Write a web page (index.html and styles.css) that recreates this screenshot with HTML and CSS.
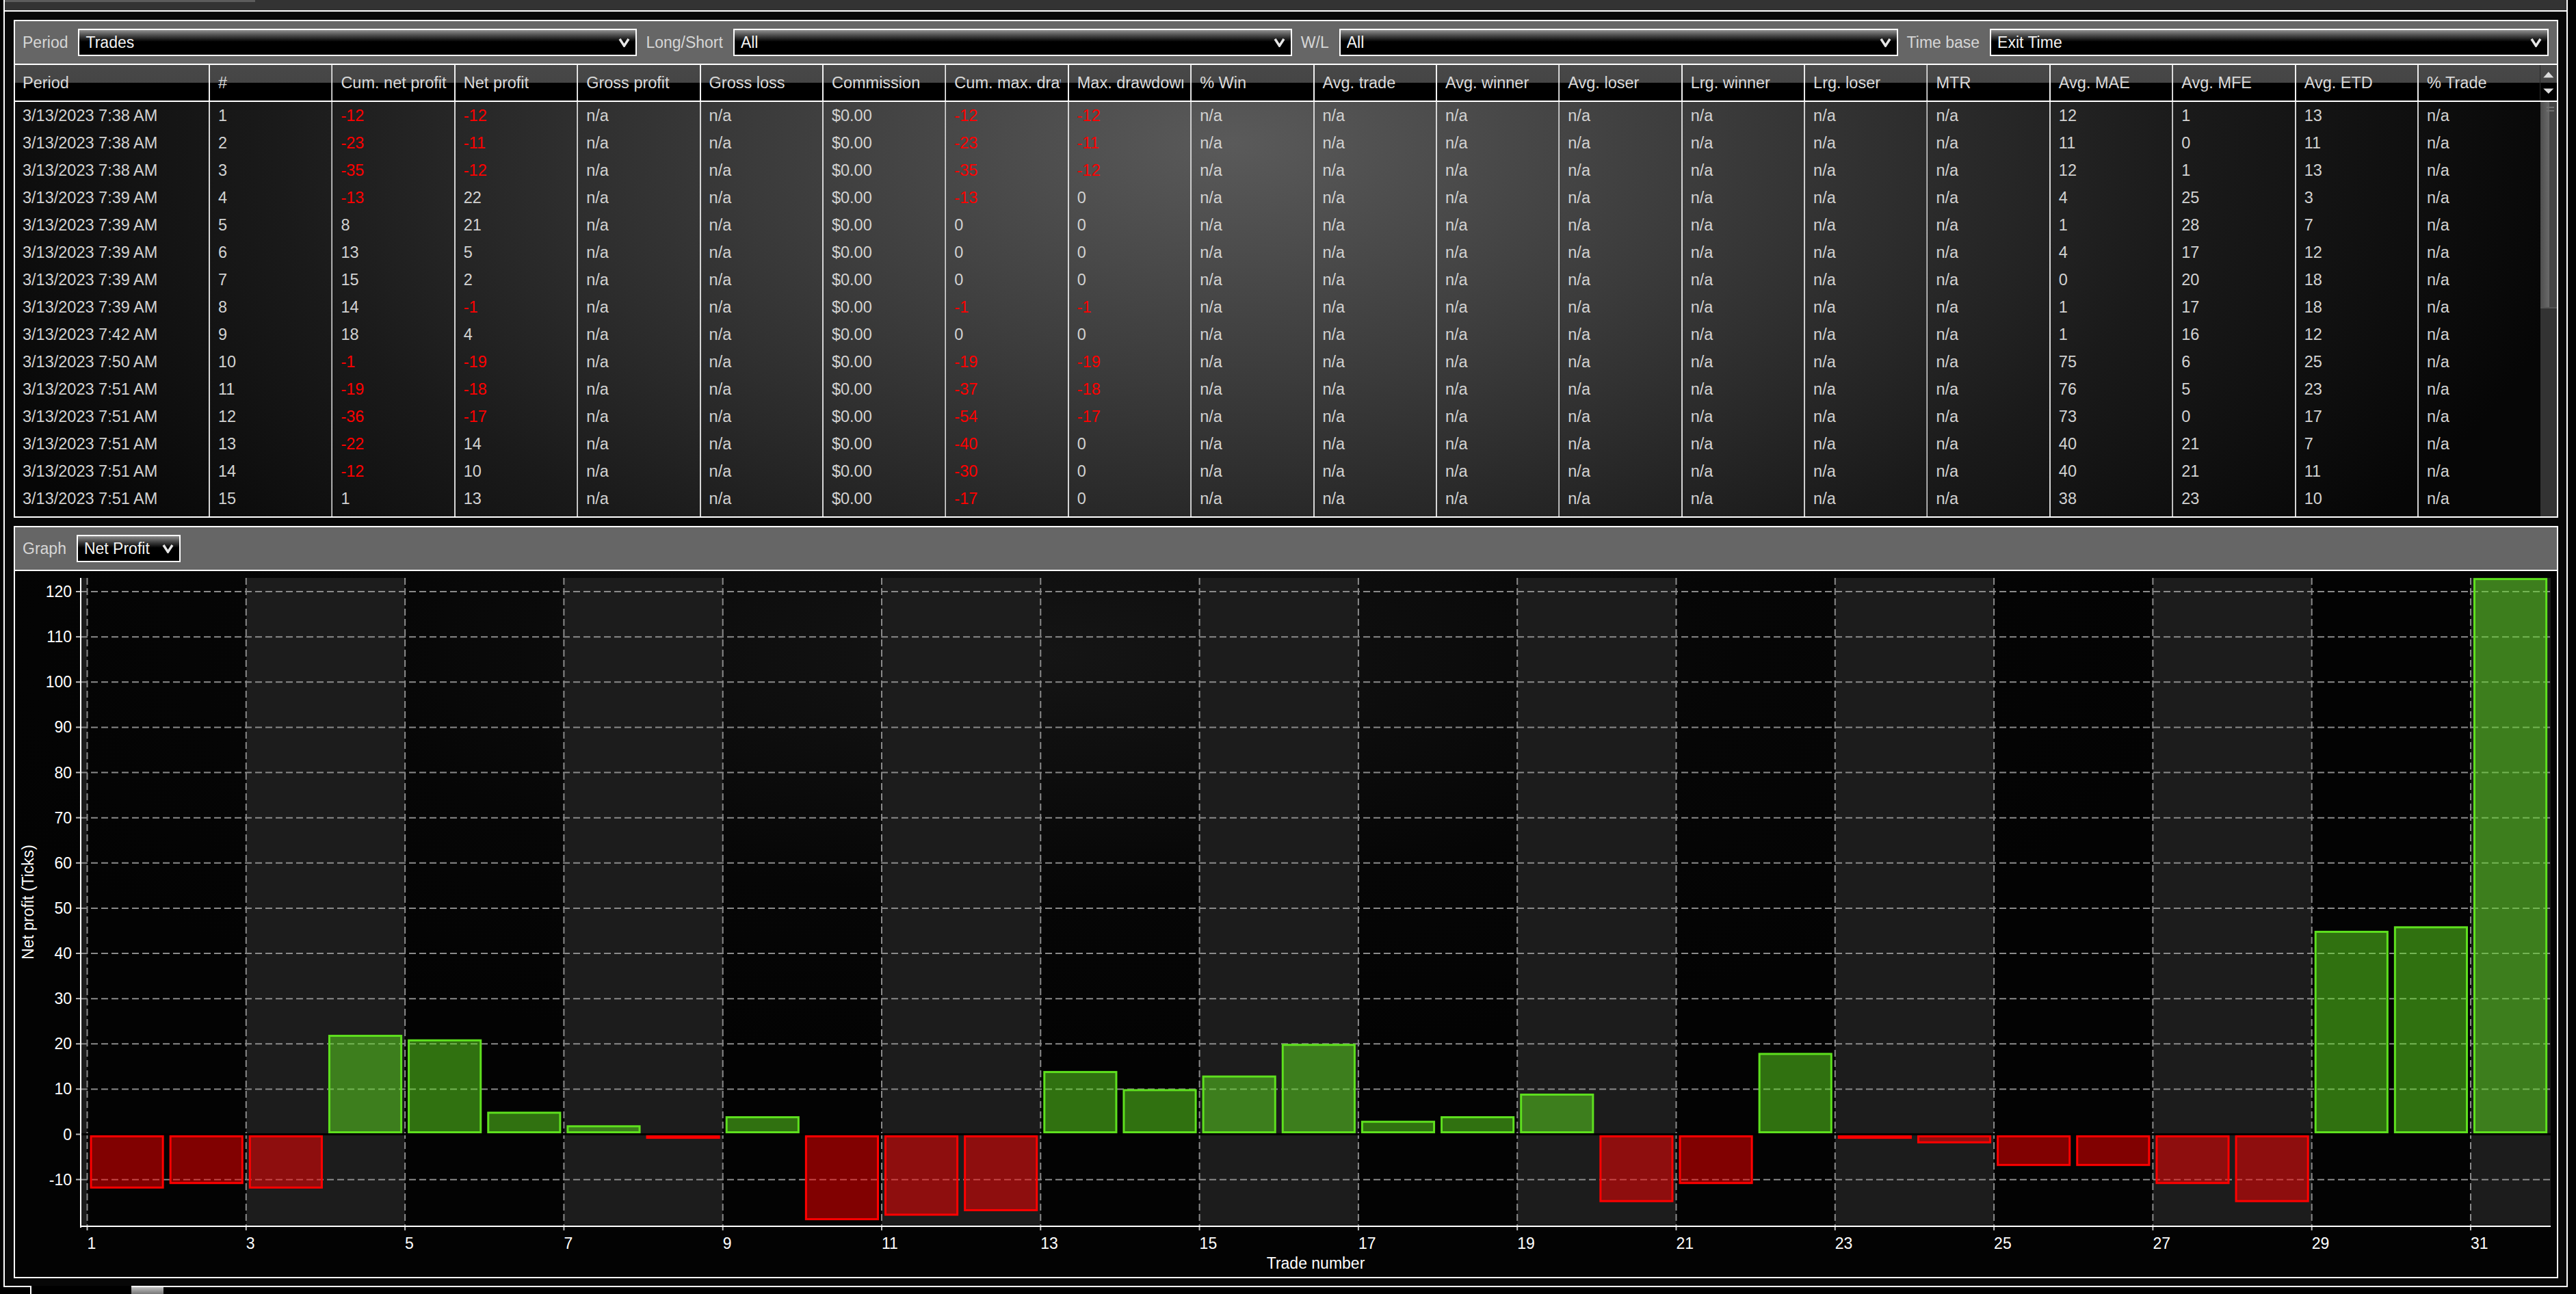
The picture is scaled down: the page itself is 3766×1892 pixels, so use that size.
FILE: index.html
```html
<!DOCTYPE html>
<html lang="en">
<head>
    <meta charset="UTF-8">
    <title>Trade Performance</title>
    <link rel="stylesheet" href="styles.css">
</head>
<body>

<div class="window">
    <div class="tabstrip"><div class="tab"></div></div>

    <div class="workspace">
        <!-- trades grid -->
        <div class="panel grid-panel">
            <div class="toolbar">
                <label>Period</label>
                <div class="dd">
                    <select><option>Trades</option></select>
                    <svg viewBox="0 0 17 14"><polyline points="2,2 8.5,12 15,2"/></svg>
                </div>
                <label>Long/Short</label>
                <div class="dd">
                    <select><option>All</option></select>
                    <svg viewBox="0 0 17 14"><polyline points="2,2 8.5,12 15,2"/></svg>
                </div>
                <label>W/L</label>
                <div class="dd">
                    <select><option>All</option></select>
                    <svg viewBox="0 0 17 14"><polyline points="2,2 8.5,12 15,2"/></svg>
                </div>
                <label>Time base</label>
                <div class="dd">
                    <select><option>Exit Time</option></select>
                    <svg viewBox="0 0 17 14"><polyline points="2,2 8.5,12 15,2"/></svg>
                </div>
            </div>

            <div class="thead">
                <div class="cell first">Period</div>
                <div class="cell">#</div>
                <div class="cell">Cum. net profit</div>
                <div class="cell">Net profit</div>
                <div class="cell">Gross profit</div>
                <div class="cell">Gross loss</div>
                <div class="cell">Commission</div>
                <div class="cell">Cum. max. drawdown</div>
                <div class="cell">Max. drawdown</div>
                <div class="cell">% Win</div>
                <div class="cell">Avg. trade</div>
                <div class="cell">Avg. winner</div>
                <div class="cell">Avg. loser</div>
                <div class="cell">Lrg. winner</div>
                <div class="cell">Lrg. loser</div>
                <div class="cell">MTR</div>
                <div class="cell">Avg. MAE</div>
                <div class="cell">Avg. MFE</div>
                <div class="cell">Avg. ETD</div>
                <div class="cell">% Trade</div>
                <div class="sb-head">
                    <svg viewBox="0 0 25 52"><polygon points="4.5,18 12.5,9 20.5,18"/><polygon points="4.5,35 20.5,35 12.5,43"/></svg>
                </div>
            </div>

            <div class="tbody">
                <div class="rows" id="rows"></div>
                <div class="sb-track">
                    <div class="sb-thumb"><div class="grip"></div></div>
                </div>
            </div>
        </div>

        <!-- graph -->
        <div class="panel graph-panel">
            <div class="toolbar">
                <label>Graph</label>
                <div class="dd narrow">
                    <select><option>Net Profit</option></select>
                    <svg viewBox="0 0 17 14"><polyline points="2,2 8.5,12 15,2"/></svg>
                </div>
            </div>
            <div class="chart" id="chart"></div>
        </div>
    </div>
</div>

<div class="hscroll">
    <div class="hs-tab"></div>
    <div class="hs-gap"></div>
    <div class="hs-track"><div class="hs-thumb"></div></div>
</div>

<script>
    // time, cum net, net, cum max dd, max dd, mae, mfe, etd
    const trades = [
        ['7:38', -12, -12, -12, -12, 12, 1, 13],
        ['7:38', -23, -11, -23, -11, 11, 0, 11],
        ['7:38', -35, -12, -35, -12, 12, 1, 13],
        ['7:39', -13, 22, -13, 0, 4, 25, 3],
        ['7:39', 8, 21, 0, 0, 1, 28, 7],
        ['7:39', 13, 5, 0, 0, 4, 17, 12],
        ['7:39', 15, 2, 0, 0, 0, 20, 18],
        ['7:39', 14, -1, -1, -1, 1, 17, 18],
        ['7:42', 18, 4, 0, 0, 1, 16, 12],
        ['7:50', -1, -19, -19, -19, 75, 6, 25],
        ['7:51', -19, -18, -37, -18, 76, 5, 23],
        ['7:51', -36, -17, -54, -17, 73, 0, 17],
        ['7:51', -22, 14, -40, 0, 40, 21, 7],
        ['7:51', -12, 10, -30, 0, 40, 21, 11],
        ['7:51', 1, 13, -17, 0, 38, 23, 10]
    ];

    function buildRows() {
        let html = '';
        trades.forEach(function (t, i) {
            const na = 'n/a';
            const vals = ['3/13/2023 ' + t[0] + ' AM', i + 1, t[1], t[2], na, na, '$0.00', t[3], t[4],
                na, na, na, na, na, na, na, t[5], t[6], t[7], na];
            html += '<div class="row">';
            vals.forEach(function (v, c) {
                let cls = 'cell';
                if (c === 0) cls += ' first';
                if (typeof v === 'number' && v < 0) cls += ' neg';
                html += '<div class="' + cls + '">' + v + '</div>';
            });
            html += '</div>';
        });
        // empty strip under the last row so the column lines run to the bottom
        html += '<div class="row filler"><div class="cell first"></div>' + '<div class="cell"></div>'.repeat(19) + '</div>';
        document.getElementById('rows').innerHTML = html;
    }

    // net profit per trade, in ticks
    const netProfit = [-12, -11, -12, 22, 21, 5, 2, -1, 4, -19, -18, -17, 14, 10, 13,
        20, 3, 4, 9, -15, -11, 18, -1, -2, -7, -7, -11, -15, 45, 46, 123];

    function buildChart() {
        const W = 3716, H = 1032;
        const pl = 96, pr = 3707, pt = 10, pb = 958;
        const step = 116.15;
        const X = n => 105.5 + (n - 1) * step;
        const Y = v => 823.5 - v * 6.6125;

        let s = '<svg width="' + W + '" height="' + H + '" viewBox="0 0 ' + W + ' ' + H + '">';

        // alternating bands, two trades wide
        for (let n = -1; n <= 31; n += 4) {
            const a = Math.max(X(n), pl), b = Math.min(X(n + 2), pr);
            if (b > a) s += '<rect class="band" x="' + a + '" y="' + pt + '" width="' + (b - a) + '" height="' + (pb - pt) + '"/>';
        }

        for (let v = 120; v >= -10; v -= 10) {
            const y = Y(v);
            s += '<line class="grid" x1="' + pl + '" y1="' + y + '" x2="' + pr + '" y2="' + y + '"/>';
            s += '<line class="tick" x1="' + (pl - 7) + '" y1="' + y + '" x2="' + pl + '" y2="' + y + '"/>';
            s += '<text class="tick-label y-label" x="' + (pl - 13) + '" y="' + (y + 8) + '">' + v + '</text>';
        }

        for (let n = 1; n <= 31; n += 2) {
            const x = X(n);
            s += '<line class="grid" x1="' + x + '" y1="' + pt + '" x2="' + x + '" y2="' + pb + '"/>';
            s += '<line class="tick" x1="' + x + '" y1="' + pb + '" x2="' + x + '" y2="' + (pb + 6) + '"/>';
            s += '<text class="tick-label" x="' + x + '" y="991">' + n + '</text>';
        }

        s += '<line class="zero" x1="' + pl + '" y1="' + Y(0) + '" x2="' + pr + '" y2="' + Y(0) + '"/>';

        netProfit.forEach(function (v, i) {
            const x = X(i + 1) + 5.5;
            let y1, y2;
            if (v >= 0) { y1 = Y(v); y2 = Y(0) - 1.5; } else { y1 = Y(0) + 1.5; y2 = Y(v); }
            const h = Math.max(0, y2 - y1 - 3);
            s += '<rect class="' + (v >= 0 ? 'bar-pos' : 'bar-neg') + '" x="' + x + '" y="' + (y1 + 1.5) +
                '" width="' + (step - 11) + '" height="' + h + '"/>';
        });

        s += '<line class="axis" x1="' + pl + '" y1="' + pt + '" x2="' + pl + '" y2="' + (pb + 2) + '"/>';
        s += '<line class="axis" x1="' + (pl - 1) + '" y1="' + pb + '" x2="' + pr + '" y2="' + pb + '"/>';

        s += '<text class="axis-title" x="' + ((pl + pr) / 2) + '" y="1020">Trade number</text>';
        s += '<text class="axis-title" transform="translate(27 484) rotate(-90)">Net profit (Ticks)</text>';
        s += '</svg>';

        document.getElementById('chart').innerHTML = s;
    }

    buildRows();
    buildChart();
</script>

</body>
</html>
```

FILE: styles.css
```css
body {
    margin: 0;
    width: 3766px;
    height: 1892px;
    overflow: hidden;
    background-color: #000;
    font-family: "Liberation Sans", Arial, sans-serif;
    font-size: 23.5px;
    color: #d4d4d4;
}
.window {
    margin-left: 5px;
    width: 3749px;
    height: 1880px;
    box-sizing: border-box;
    border-left: 2px solid #fff;
    border-right: 2px solid #fff;
    display: flex;
    flex-direction: column;
}
.tabstrip {
    height: 15px;
    flex: none;
    background-color: #333;
}
.tab {
    width: 366px;
    height: 3px;
    background-color: #5c5c5c;
}
.workspace {
    flex: 1;
    min-height: 0;
    border-top: 2px solid #fff;
    padding: 12px 12px 11px 13px;
    display: flex;
    flex-direction: column;
    gap: 12px;
    background-color: #070707;
}
.panel {
    border: 2px solid #fff;
    display: flex;
    flex-direction: column;
}
.grid-panel {
    height: 728px;
    box-sizing: border-box;
    flex: none;
}
.graph-panel {
    flex: 1;
    min-height: 0;
}

/* toolbars with drop downs */
.toolbar {
    height: 62px;
    flex: none;
    background-color: #666;
    border-bottom: 2px solid #fff;
    display: flex;
    align-items: center;
    padding: 0 12px 0 11px;
}
.toolbar label {
    color: #d6d6d6;
    margin-right: 15px;
    white-space: nowrap;
    font-size: 23px;
}
.dd {
    position: relative;
    flex: 1;
    height: 40px;
    margin-right: 13px;
}
.dd:last-child {
    margin-right: 0;
}
.dd.narrow {
    flex: none;
    width: 152px;
}
.dd select {
    -webkit-appearance: none;
    appearance: none;
    width: 100%;
    height: 100%;
    box-sizing: border-box;
    border: 2px solid #fff;
    border-radius: 0;
    background: linear-gradient(#8e8e8e 0%, #3a3a3a 27%, #000 47%, #000 100%);
    color: #f2f2f2;
    font-family: inherit;
    font-size: 23px;
    padding: 0 40px 0 9px;
    outline: none;
}
.dd svg {
    position: absolute;
    right: 10px;
    top: 13px;
    width: 17px;
    height: 14px;
    pointer-events: none;
}
.dd polyline {
    fill: none;
    stroke: #e6e6e6;
    stroke-width: 3.5;
}

/* grid */
.thead {
    display: flex;
    height: 52px;
    flex: none;
    border-bottom: 2px solid #fff;
    background: linear-gradient(#484848 0%, #454545 50%, #000 50%, #000 100%);
}
.cell {
    flex: none;
    width: 179.4px;
    box-sizing: border-box;
    border-left: 2px solid #f0f0f0;
    padding-left: 12px;
    white-space: nowrap;
    overflow: hidden;
    display: flex;
    align-items: center;
    clip-path: inset(0 10px 0 0);
}
.cell.first {
    width: 283px;
    border-left: 0;
    padding-left: 11px;
}
.thead .cell {
    color: #dadada;
}
.sb-head {
    flex: 1;
    border-left: 1px solid #2a2a2a;
}
.sb-head svg {
    display: block;
    width: 100%;
    height: 52px;
}
.sb-head polygon {
    fill: #dcdcdc;
}
.tbody {
    flex: 1;
    min-height: 0;
    display: flex;
}
.rows {
    flex: none;
    width: 3691.6px;
    display: flex;
    flex-direction: column;
    background: radial-gradient(ellipse 2000px 1000px at 1780px 60px, #5a5a5a 0%, #3b3b3b 35%, #1a1a1a 70%, #060606 100%);
}
.row {
    display: flex;
    height: 40px;
    flex: none;
}
.row.filler {
    flex: 1;
    height: auto;
}
.rows .cell {
    color: #d2d2d2;
    border-left-color: #d6d6d6;
}
.rows .cell.neg {
    color: #ff0000;
}
.sb-track {
    flex: 1;
    background-color: #333;
}
.sb-thumb {
    height: 300px;
    overflow: hidden;
    border-bottom: 2px solid #555;
    background: linear-gradient(to right, #4e4e4e 0%, #6a6a6a 54%, #444 55%, #444 100%);
}
.grip {
    height: 2px;
    margin: 7px 4px 0 9px;
    background-color: #707070;
    box-shadow: 0 5px 0 #707070;
}

/* chart */
.chart {
    flex: 1;
    min-height: 0;
    background: radial-gradient(ellipse 1700px 600px at 1500px 120px, #151515 0%, #060606 60%, #030303 100%);
}
.chart svg {
    display: block;
}
.band {
    fill: #1c1c1c;
}
.grid {
    stroke: #8a8a8a;
    stroke-width: 2;
    stroke-dasharray: 10 5;
}
.tick {
    stroke: #bdbdbd;
    stroke-width: 2;
}
.zero {
    stroke: #000;
    stroke-width: 3;
}
.axis {
    stroke: #fff;
    stroke-width: 2;
}
.bar-pos {
    fill: rgba(94, 224, 30, 0.5);
    stroke: #5ee01e;
    stroke-width: 3;
}
.bar-neg {
    fill: rgba(255, 0, 0, 0.5);
    stroke: #ff0000;
    stroke-width: 3;
}
.tick-label,
.axis-title {
    fill: #fff;
    font-family: "Liberation Sans", Arial, sans-serif;
    font-size: 23px;
}
.y-label {
    text-anchor: end;
}
.axis-title {
    text-anchor: middle;
}

/* bottom tab / scroll strip */
.hscroll {
    margin-left: 5px;
    width: 3749px;
    height: 12px;
    display: flex;
}
.hs-tab {
    width: 41px;
    flex: none;
    box-sizing: border-box;
    border-top: 2px solid #fff;
    border-right: 2px solid #fff;
}
.hs-gap {
    width: 146px;
    flex: none;
}
.hs-track {
    flex: 1;
    border-top: 2px solid #fff;
}
.hs-thumb {
    width: 47px;
    height: 10px;
    background: linear-gradient(#c0c0c0, #777);
}
```
